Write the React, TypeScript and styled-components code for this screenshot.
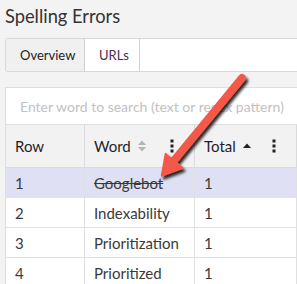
import React from "react";
import styled, { createGlobalStyle } from "styled-components";

const Global = createGlobalStyle`
  html, body { margin: 0; padding: 0; background: #f3f3f3; }
  body { font-family: Lato, "Noto Sans", sans-serif; overflow: hidden; }
`;

const Page = styled.div`
  position: relative;
  width: 297px;
  height: 284px;
  padding-left: 5px;
  box-sizing: border-box;
  overflow: hidden;
`;

const Title = styled.h1`
  margin: 0;
  padding-top: 4px;
  height: 34px;
  font-size: 18.3px;
  font-weight: 400;
  color: #333;
  line-height: 24px;
`;

const Tabs = styled.div`
  display: flex;
  height: 34px;
  background: #fff;
  border: 1px solid #d8d8d8;
  border-right: none;
  border-radius: 3px 0 0 3px;
  box-sizing: border-box;
`;

const Tab = styled.div<{ $active?: boolean }>`
  display: flex;
  align-items: center;
  padding: 0 14px;
  width: ${(p) => (p.$active ? "79px" : "55px")};
  box-sizing: border-box;
  border-right: 1px solid #d0d0d0;
  background: ${(p) => (p.$active ? "#f0f0f0" : "#fff")};
  color: ${(p) => (p.$active ? "#222" : "#4a2f55")};
  font-size: 13px;
`;

const Panel = styled.div`
  margin-top: 15px;
  background: #fff;
  border: 1px solid #dedede;
  border-right: none;
  border-bottom: none;
`;

const Search = styled.div`
  height: 36px;
  display: flex;
  align-items: center;
  padding-left: 14px;
  color: #c2c2c2;
  font-size: 14px;
  white-space: nowrap;
  border-bottom: 1px solid #dedede;
`;

const Grid = styled.div`
  display: grid;
  grid-template-columns: 79px 110px 1fr;
`;

const HeadCell = styled.div`
  height: 43px;
  box-sizing: border-box;
  background: #f2f2f2;
  border-right: 1px solid #dadada;
  border-bottom: 1px solid #dadada;
  display: flex;
  align-items: center;
  padding: 0 20px 0 9px;
  font-size: 15px;
  color: #1e1e2a;
  gap: 6px;
`;

const HeadLabel = styled.span`
  flex: 0 0 auto;
`;

const Spacer = styled.span`
  flex: 1;
`;

const Cell = styled.div<{ $sel?: boolean; $strike?: boolean }>`
  height: 30px;
  box-sizing: border-box;
  background: ${(p) => (p.$sel ? "#dfe0f3" : "#fff")};
  border-right: 1px solid #e0e0e0;
  border-bottom: 1px solid #e2e2e2;
  display: flex;
  align-items: center;
  padding: 0 9px;
  font-size: 15px;
  color: #3a3a3a;
  text-decoration: ${(p) => (p.$strike ? "line-through" : "none")};
  white-space: nowrap;
`;

const ArrowSvg = styled.svg`
  position: absolute;
  left: 0;
  top: 0;
  pointer-events: none;
`;

const Kebab = () => (
  <svg width="4" height="14" viewBox="0 0 4 14">
    <rect x="0.5" y="0.5" width="3" height="3" fill="#222" />
    <rect x="0.5" y="5.5" width="3" height="3" fill="#222" />
    <rect x="0.5" y="10.5" width="3" height="3" fill="#222" />
  </svg>
);

const SortBoth = () => (
  <svg width="10" height="14" viewBox="0 0 10 14">
    <path d="M1 6 L5 1.5 L9 6 Z" fill="#b5b5b5" />
    <path d="M1 8 L5 12.5 L9 8 Z" fill="#b5b5b5" />
  </svg>
);

const SortUp = () => (
  <svg width="10" height="8" viewBox="0 0 10 8">
    <path d="M1 6 L5 1.5 L9 6 Z" fill="#222" />
  </svg>
);

const rows = [
  { n: "1", w: "Googlebot", t: "1", sel: true },
  { n: "2", w: "Indexability", t: "1" },
  { n: "3", w: "Prioritization", t: "1" },
  { n: "4", w: "Prioritized", t: "1" },
];

export default function App() {
  return (
    <>
      <Global />
      <Page>
        <Title>Spelling Errors</Title>
        <Tabs>
          <Tab $active>Overview</Tab>
          <Tab>URLs</Tab>
        </Tabs>
        <Panel>
          <Search>Enter word to search (text or regex pattern)</Search>
          <Grid>
            <HeadCell>
              <HeadLabel>Row</HeadLabel>
            </HeadCell>
            <HeadCell>
              <HeadLabel>Word</HeadLabel>
              <SortBoth />
              <Spacer />
              <Kebab />
            </HeadCell>
            <HeadCell>
              <HeadLabel>Total</HeadLabel>
              <SortUp />
              <Spacer />
              <Kebab />
            </HeadCell>
            {rows.map((r) => (
              <React.Fragment key={r.n}>
                <Cell $sel={r.sel}>{r.n}</Cell>
                <Cell $sel={r.sel} $strike={r.sel}>
                  {r.w}
                </Cell>
                <Cell $sel={r.sel}>{r.t}</Cell>
              </React.Fragment>
            ))}
          </Grid>
        </Panel>
        <ArrowSvg width="297" height="284" viewBox="0 0 297 284">
          <defs>
            <filter id="sh" x="-20%" y="-20%" width="140%" height="140%">
              <feGaussianBlur in="SourceAlpha" stdDeviation="1.6" />
              <feOffset dx="2" dy="3" result="b" />
              <feComponentTransfer>
                <feFuncA type="linear" slope="0.85" />
              </feComponentTransfer>
              <feMerge>
                <feMergeNode />
                <feMergeNode in="SourceGraphic" />
              </feMerge>
            </filter>
          </defs>
          <g filter="url(#sh)" fill="#f4584a" stroke="#f4584a">
            <line
              x1="242"
              y1="78"
              x2="172"
              y2="163"
              strokeWidth="8"
              strokeLinecap="round"
            />
            <path d="M161.5 176 L183 168 L165.5 153.5 Z" strokeWidth="1.5" strokeLinejoin="round" />
          </g>
        </ArrowSvg>
      </Page>
    </>
  );
}
